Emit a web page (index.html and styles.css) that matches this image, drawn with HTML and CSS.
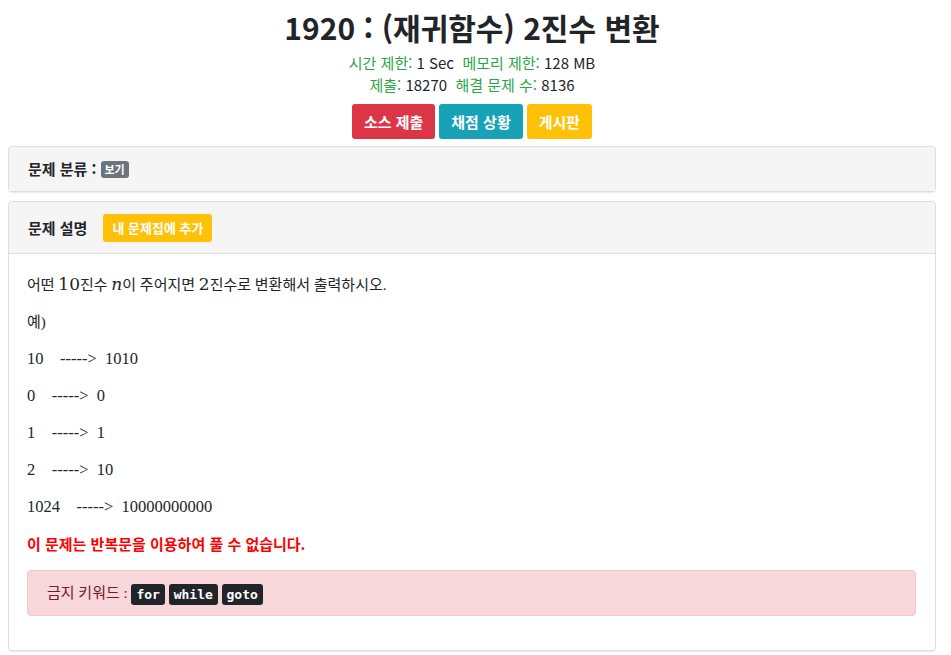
FILE: index.html
```html
<!DOCTYPE html>
<html lang="ko">
<head>
<meta charset="utf-8">
<link rel="stylesheet" href="styles.css">
</head>
<body>
<div class="page">
  <header class="head">
    <h1 class="title">1920 : (재귀함수) 2진수 변환</h1>
    <div class="info"><span class="lbl">시간 제한:</span> 1 Sec &nbsp;<span class="lbl">메모리 제한:</span> 128 MB</div>
    <div class="info"><span class="lbl">제출:</span> 18270 &nbsp;<span class="lbl">해결 문제 수:</span> 8136</div>
    <div class="btns">
      <a class="btn btn-red">소스 제출</a>
      <a class="btn btn-teal">채점 상황</a>
      <a class="btn btn-yellow">게시판</a>
    </div>
  </header>

  <section class="card card-simple">
    <div class="card-head">
      <span class="card-title">문제 분류 :</span> <span class="badge">보기</span>
    </div>
  </section>

  <section class="card">
    <div class="card-head card-head-line">
      <span class="card-title">문제 설명</span>
      <a class="btn-small">내 문제집에 추가</a>
    </div>
    <div class="card-body">
      <p>어떤 <span class="math">10</span>진수 <span class="math italic">n</span>이 주어지면 <span class="math">2</span>진수로 변환해서 출력하시오.</p>
      <p>예)</p>
      <p class="num">10&nbsp;&nbsp;&nbsp; -----&gt;&nbsp; 1010</p>
      <p class="num">0&nbsp;&nbsp;&nbsp; -----&gt;&nbsp; 0</p>
      <p class="num">1&nbsp;&nbsp;&nbsp; -----&gt;&nbsp; 1</p>
      <p class="num">2&nbsp;&nbsp;&nbsp; -----&gt;&nbsp; 10</p>
      <p class="num">1024&nbsp;&nbsp;&nbsp; -----&gt;&nbsp; 10000000000</p>
      <p class="warn">이 문제는 반복문을 이용하여 풀 수 없습니다.</p>
      <div class="alert">금지 키워드 : <code>for</code> <code>while</code> <code>goto</code></div>
    </div>
  </section>
</div>
</body>
</html>
```

FILE: styles.css
```css
html, body {
  margin: 0;
  padding: 0;
  background: #fff;
}
.page {
  padding: 0 15px 8px 8px;
  font-family: "Noto Sans CJK KR", "Noto Sans", sans-serif;
  color: #212529;
}
.head {
  text-align: center;
}
.title {
  margin: 0 0 4px;
  padding-top: 6px;
  font-size: 30px;
  font-weight: 700;
  line-height: 42px;
  color: #212529;
}
.info {
  font-size: 15px;
  line-height: 22px;
}
.lbl {
  color: #28a745;
}
.btns {
  display: flex;
  justify-content: center;
  gap: 4px;
  margin-top: 8px;
}
.btn {
  display: inline-block;
  padding: 0 12px;
  height: 35px;
  line-height: 35px;
  border-radius: 3px;
  color: #fff;
  font-weight: 700;
  font-size: 15px;
}
.btn-red { background: #dc3545; }
.btn-teal { background: #17a2b8; }
.btn-yellow { background: #ffc107; }

.card {
  border: 1px solid #ddd;
  border-radius: 4px;
  background: #fff;
  box-shadow: 0 1px 1px rgba(0,0,0,0.08);
}
.card-simple {
  margin-top: 7px;
  margin-bottom: 9px;
  background: #f5f5f5;
}
.card-head {
  display: flex;
  align-items: center;
  padding: 12px 19px;
  line-height: 20px;
  background: #f5f5f5;
  border-radius: 4px 4px 0 0;
}
.card-head-line {
  padding: 12px 19px 11px;
  border-bottom: 1px solid #ddd;
}
.card-title {
  font-size: 15px;
  font-weight: 700;
  color: #212529;
}
.badge {
  display: inline-block;
  margin-left: 4px;
  padding: 0 4px;
  height: 17px;
  line-height: 17px;
  font-size: 11px;
  font-weight: 700;
  color: #fff;
  background: #6c757d;
  border-radius: 3px;
}
.btn-small {
  display: inline-block;
  margin-left: 16px;
  padding: 0 9px;
  height: 28px;
  line-height: 28px;
  background: #ffc107;
  color: #fff;
  font-size: 13px;
  font-weight: 700;
  border-radius: 3px;
}
.card-body {
  padding: 19px 19px 34px 18px;
  font-family: "Liberation Serif", "Noto Sans CJK KR", serif;
  font-size: 15px;
}
.card-body p {
  margin: 0 0 13px;
  height: 24px;
  line-height: 24px;
}
.card-body p.num {
  font-size: 16.5px;
}
.math {
  font-family: "DejaVu Serif", "Liberation Serif", serif;
  font-size: 17px;
  line-height: 1;
}
.italic {
  font-style: italic;
}
.card-body p.warn {
  margin-bottom: 14px;
  color: #f00;
  font-weight: 700;
  font-family: "Noto Sans CJK KR", sans-serif;
  font-size: 15px;
}
.alert {
  padding: 10px 19px;
  line-height: 24px;
  background: #f8d7da;
  border: 1px solid #f5c6cb;
  border-radius: 4px;
  color: #721c24;
  font-size: 15px;
}
.alert code {
  display: inline-block;
  padding: 0 5px;
  height: 21px;
  line-height: 21px;
  background: #212529;
  color: #fff;
  font-family: "DejaVu Sans Mono", monospace;
  font-size: 13px;
  font-weight: 700;
  border-radius: 3px;
  vertical-align: middle;
}
```
